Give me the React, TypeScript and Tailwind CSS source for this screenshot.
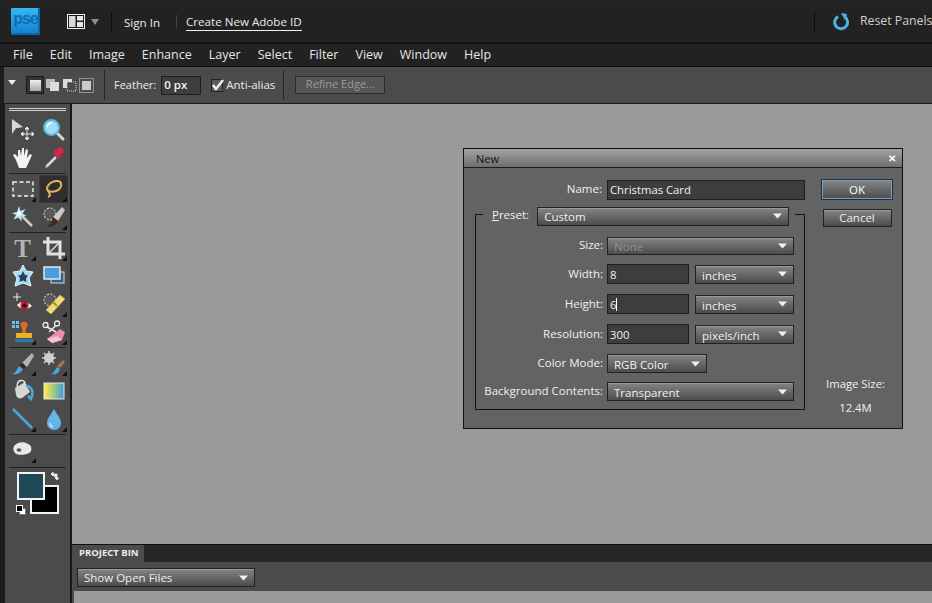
import type { ReactNode } from 'react'

const sel = 'bg-gradient-to-b from-[#858585] to-[#4c4c4c] border border-[#222] shadow-[inset_0_1px_0_#9a9a9a]'
const inputBox = 'bg-[#3d3d3d] border border-[#1d1d1d] text-[#f2f2f2] pl-[2px] text-[11.300px] flex items-center'

function Caret({ className = '' }: { className?: string }) {
  return (
    <svg width="9" height="6" viewBox="0 0 9 6" className={className}>
      <path d="M0 0.5h9L4.5 5.5z" fill="#f0f0f0" />
    </svg>
  )
}

function Select({ label, width, muted, height = 'h-[20px]', shift = 'translate-y-px' }: { label: string; width: string; muted?: boolean; height?: string; shift?: string }) {
  return (
    <div className={`${sel} ${width} ${height} pl-[6px] pr-[6px] flex items-center justify-between text-[11.500px] ${muted ? 'text-[#8e8e8e]' : 'text-[#f0f0f0]'}`}>
      <span className={shift}>{label}</span>
      <Caret />
    </div>
  )
}

function Label({ children, shift = '-translate-y-[1px]' }: { children: ReactNode; shift?: string }) {
  return <span className={`w-[128px] shrink-0 text-right whitespace-nowrap text-[11.500px] text-[#f0f0f0] pr-[1px] ${shift}`}>{children}</span>
}

function Row({ label, children, className = '', shift }: { label: string; children: ReactNode; className?: string; shift?: string }) {
  return (
    <div className={`flex items-center ${className}`}>
      <Label shift={shift}>{label}</Label>
      {children}
    </div>
  )
}

function Tool({ children, corner, active }: { children: ReactNode; corner?: boolean; active?: boolean }) {
  return (
    <div className={`relative w-[29px] h-[28px] flex items-center justify-center ${active ? 'bg-[#2f2f2f] shadow-[inset_0_0_0_1px_#3a3a3a]' : ''}`}>
      {children}
      {corner && (
        <svg width="5" height="5" viewBox="0 0 5 5" className="absolute right-[1px] bottom-[1px]">
          <path d="M5 0v5H0z" fill="#111" />
        </svg>
      )}
    </div>
  )
}

function Sep() {
  return <div className="h-px bg-[#222] mx-[4px] my-[1px]" />
}

function Ic({ children }: { children: ReactNode }) {
  return <svg width="24" height="24" viewBox="0 0 24 24">{children}</svg>
}

const toolRows: ReactNode[][] = [
  [
    <Tool key="move"><Ic><path d="M1 1l11 8-5 1-2 0-4 6z" fill="#d8d8d8" /><path d="M16 10v11M11 16h11M16 9l-2 2h4zM16 22l-2-2h4zM10 16l2-2v4zM23 16l-2-2v4z" stroke="#e6e6e6" strokeWidth="1" fill="#e6e6e6" /></Ic></Tool>,
    <Tool key="zoom"><Ic><path d="M14 14l7 7" stroke="#d5d5d5" strokeWidth="3" strokeLinecap="round" /><circle cx="9.5" cy="9.5" r="7.5" fill="#a5dcf5" stroke="#5ab4e2" strokeWidth="2" /><path d="M5 9a5 5 0 0 1 5-4" stroke="#fff" strokeWidth="1.5" fill="none" /></Ic></Tool>,
  ],
  [
    <Tool key="hand"><Ic><path d="M5 14L2 9l2-1 3 3 0-7 2 0 1 6 1-8h2l0 8 2-7 2 1-1 8 3-4 2 1-4 9-2 4H8z" fill="#f2f2f2" /></Ic></Tool>,
    <Tool key="eyedropper"><Ic><path d="M13 10l-9 9-1 3 3-1 9-9z" fill="#d9d9d9" stroke="#777" strokeWidth=".7" /><path d="M11 7l6 6 2-3-1-1 4-3-1-4-4-1-3 4-1-1z" fill="#d8264a" /></Ic></Tool>,
  ],
  [
    <Tool key="marquee" corner><svg width="22" height="16" viewBox="0 0 22 16"><rect x="1" y="1" width="20" height="14" fill="#565656" stroke="#f2f2f2" strokeWidth="1.4" strokeDasharray="4 2.5" /></svg></Tool>,
    <Tool key="lasso" corner active><Ic><path d="M6 20c3-1 2-4 0-6-3-4 3-11 10-10 5 1 4 8-2 10-3 1-7 1-8-1" fill="none" stroke="#e4b25e" strokeWidth="2" /></Ic></Tool>,
  ],
  [
    <Tool key="wand"><Ic><path d="M11 11l10 10" stroke="#cfcfcf" strokeWidth="2.5" /><path d="M8 1l1.5 5 5-2-3 4.500 4 2.500-5 .5 0 5-3-4-5 2 2.500-4.500L1 8l5-1z" fill="#bfe6fa" /><circle cx="8" cy="8.500" r="2" fill="#fff" /></Ic></Tool>,
    <Tool key="selbrush" corner><Ic><circle cx="8" cy="9" r="6" fill="#5a5a5a" stroke="#eee" strokeDasharray="2 1.500" /><path d="M11 12l9-10 3 3-7 11z" fill="#c9c9c9" /><path d="M4 22c5 0 10-1 12-6l-5-4c-1 5-3 8-7 10z" fill="#4b2a18" /></Ic></Tool>,
  ],
  [
    <Tool key="text" corner><span className="font-['Liberation_Serif',serif] text-[25px] leading-none font-bold text-[#b4b4b4]">T</span></Tool>,
    <Tool key="crop" corner><Ic><path d="M6 1v17h17M1 6h17v17" fill="none" stroke="#e2e2e2" strokeWidth="3" /><path d="M6 18L18 6" stroke="#e2e2e2" strokeWidth="1.500" /></Ic></Tool>,
  ],
  [
    <Tool key="cookie"><Ic><path d="M12 1l3 6 7 1-4 6 2 8-8-3-8 3 2-8-4-6 7-1z" fill="#a9dcf0" stroke="#e6f6fc" /><path d="M12 7l2 4 3 .5-2 3 .5 3.500-3.500-1.500-3.500 1.500.5-3.500-2-3 3-.5z" fill="#23475a" /></Ic></Tool>,
    <Tool key="shape"><Ic><rect x="9" y="8" width="13" height="11" fill="#3a5f7d" stroke="#d9d9d9" /><rect x="2" y="3" width="16" height="12" fill="#4a9ee0" stroke="#e6e6e6" strokeWidth="1.500" /></Ic></Tool>,
  ],
  [
    <Tool key="redeye"><Ic><path d="M6 1v8M2 5h8" stroke="#eee" strokeWidth="1" /><path d="M6 13c4-4 10-4 15 1-5 4-11 4-15-1z" fill="#f3f3f3" /><circle cx="13.500" cy="13.500" r="4" fill="#c0132a" /><circle cx="13.500" cy="13.500" r="1.800" fill="#111" /></Ic></Tool>,
    <Tool key="heal" corner><Ic><circle cx="8" cy="8" r="6" fill="#5a5a5a" stroke="#eee" strokeDasharray="2 1.500" /><path d="M4 18L18 3l5 4L9 22z" fill="#f0dc72" stroke="#c9b24a" strokeWidth=".6" /><path d="M11 10l4 4" stroke="#a68f33" strokeWidth="2" /></Ic></Tool>,
  ],
  [
    <Tool key="stamp" corner><Ic><rect x="1" y="1" width="3" height="3" fill="#6ec0f0" /><rect x="5" y="5" width="3" height="3" fill="#6ec0f0" /><rect x="5" y="1" width="3" height="3" fill="#6ec0f0" /><rect x="1" y="5" width="3" height="3" fill="#6ec0f0" /><circle cx="13" cy="5" r="3.500" fill="#d96a20" /><rect x="11" y="7" width="4" height="7" fill="#d96a20" /><rect x="5" y="13" width="16" height="5" fill="#efae26" /><rect x="4" y="19" width="18" height="3" fill="#1f7fb0" /></Ic></Tool>,
    <Tool key="cut" corner><Ic><circle cx="3.500" cy="5" r="2.500" fill="none" stroke="#eee" strokeWidth="1.300" /><circle cx="15" cy="3.500" r="2.500" fill="none" stroke="#eee" strokeWidth="1.300" /><path d="M5 7l9 5M13.500 6L7 12" stroke="#eee" strokeWidth="1.500" /><path d="M5 19l13-10 5 3-3 8-10 3z" fill="#ec8fa6" /><path d="M5 19l5 4 10-3-5-4z" fill="#f6c3cf" /></Ic></Tool>,
  ],
  [
    <Tool key="brush" corner><Ic><path d="M11 12L21 2l2 3-7 11z" fill="#b4b4b4" /><path d="M8 14l4-2 3 4-3 2z" fill="#2a2a2a" /><path d="M1 23c4-1 5-5 7-8l4 3c-2 4-6 6-11 5z" fill="#4aa8dc" /></Ic></Tool>,
    <Tool key="smart" corner><Ic><circle cx="7" cy="7" r="3.500" fill="none" stroke="#cfcfcf" strokeWidth="3" /><path d="M7 0v14M0 7h14M2 2l10 10M12 2L2 12" stroke="#cfcfcf" strokeWidth="1.500" /><path d="M15 15l6-6 2 2-5 6z" fill="#9a7a55" /><path d="M9 23c3-1 4-4 6-7l3 2c-1 4-4 6-9 5z" fill="#4aa8dc" /></Ic></Tool>,
  ],
  [
    <Tool key="bucket"><Ic><path d="M4 9l10-6 5 10-8 6c-3 1-5 0-6-3z" fill="#d6d6d6" /><path d="M6 8c0-8 7-8 8-4" fill="none" stroke="#eee" strokeWidth="1.300" /><path d="M15 7c6 0 8 6 5 13l-3-3" fill="none" stroke="#4aa8dc" strokeWidth="2.500" /></Ic></Tool>,
    <Tool key="gradient"><svg width="22" height="18" viewBox="0 0 22 18"><defs><linearGradient id="gr" x1="0" x2="1" y1="0.500" y2="0.500"><stop offset="0" stopColor="#fff23a" /><stop offset="1" stopColor="#3d9bd6" /></linearGradient></defs><rect x="1" y="1" width="20" height="16" fill="url(#gr)" stroke="#e6e6e6" /></svg></Tool>,
  ],
  [
    <Tool key="line" corner><Ic><path d="M2 2l19 19" stroke="#4aa8dc" strokeWidth="2.500" /></Ic></Tool>,
    <Tool key="blur" corner><Ic><path d="M12 2c3 6 7 9 7 14a7 7 0 0 1-14 0c0-5 4-8 7-14z" fill="#62b5e6" /><path d="M8 16a4 4 0 0 0 3 4" stroke="#cfeaf8" strokeWidth="1.500" fill="none" /></Ic></Tool>,
  ],
]

function Toolbar() {
  return (
    <div className="w-[68px] shrink-0 ml-[4px] bg-[#4b4b4b] border-l border-[#1c1c1c] border-r-2 border-r-[#181818] pt-[4px] h-full">
      <div className="mx-[4px] h-[3px] border-y border-[#d2d2d2]" />
      <div className="mt-[5px]">
        {toolRows.map((pair, i) => (
          <div key={i}>
            {(i === 2 || i === 4 || i === 8 || i === 11) && <Sep />}
            <div className="flex justify-between pl-[3px] pr-[2px]">{pair}</div>
          </div>
        ))}
        <Sep />
        <div className="pl-[3px]">
          <Tool corner><Ic><path d="M3 8c3-4 10-5 14-2 3 1 4 4 3 7-1 4-14 5-16 2-2-2-2-5-1-7z" fill="#e8e8e8" /><ellipse cx="8" cy="12" rx="2.500" ry="1.800" fill="#555" /></Ic></Tool>
        </div>
        <div className="h-[2px]" />
        <Sep />
        <div className="relative h-[50px] mx-[12px] mt-[4px]">
          <div className="absolute left-[13px] top-[13px] w-[29px] h-[29px] bg-black border-2 border-[#f2f2f2]" />
          <div className="absolute left-0 top-0 w-[28px] h-[28px] bg-[#1e4a58] border-2 border-[#f2f2f2]" />
          <svg width="10" height="10" viewBox="0 0 10 10" className="absolute left-[33px] -top-[1px]">
            <path d="M1 3h6v5M1 3l2-2v4zM7 9L5 7h4z" stroke="#eee" fill="#eee" strokeWidth=".8" />
          </svg>
          <div className="absolute -left-[1px] top-[33px] w-[7px] h-[7px] bg-black border border-white z-10" />
          <div className="absolute left-[2px] top-[36px] w-[7px] h-[7px] bg-white border border-[#777]" />
        </div>
      </div>
    </div>
  )
}

function Dialog() {
  return (
    <div className="absolute left-[391px] top-[44px] w-[440px] h-[281px] border border-[#111] bg-[#636363] flex flex-col">
      <div className="h-[19px] shrink-0 bg-gradient-to-b from-[#a3a3a3] to-[#6f6f6f] border-b border-[#1c1c1c] flex items-center justify-between pl-[12px] pr-[6px] text-[11px] text-[#111]">
        <span className="translate-y-px">New</span>
        <span className="text-white font-bold text-[10px]">✕</span>
      </div>
      <div className="flex pl-[11px] pt-[12px] relative flex-1">
        <div className="w-[331px] shrink-0">
          <div className="flex items-center h-[20px]">
            <Label>Name:</Label>
            <div className={`${inputBox} w-[198px] h-[20px] ml-[4px]`}><span>Christmas Card</span></div>
          </div>
          <div className="relative mt-[14px] border border-[#111] h-[196px] w-[330px]">
            <div className="absolute -top-[9px] left-[7px] pl-[9px] pr-[6px] bg-[#636363] flex items-center gap-[8px] h-[20px]">
              <span className="text-[11.500px] text-[#f0f0f0] -translate-y-[1px]"><span className="underline">P</span>reset:</span>
              <Select label="Custom" width="w-[252px]" height="h-[19px]" />
            </div>
            <div className="flex flex-col pt-[21px]">
              <Row label="Size:" className="h-[19px]"><div className="w-[3px]" /><Select label="None" muted width="w-[187px]" height="h-[18px]" /></Row>
              <Row label="Width:" className="mt-[9px] h-[20px]" shift="translate-y-0">
                <div className="w-[3px]" />
                <div className={`${inputBox} w-[82px] h-[20px]`}><span className="translate-y-px">8</span></div>
                <Select label="inches" width="w-[99px] ml-[6px]" height="h-[19px]" shift="translate-y-[2px]" />
              </Row>
              <Row label="Height:" className="mt-[10px] h-[20px]" shift="translate-y-0">
                <div className="w-[3px]" />
                <div className={`${inputBox} w-[82px] h-[20px]`}><span className="translate-y-px">6</span><span className="w-px h-[13px] bg-white" /></div>
                <Select label="inches" width="w-[99px] ml-[6px]" height="h-[19px]" shift="translate-y-[2px]" />
              </Row>
              <Row label="Resolution:" className="mt-[10px] h-[20px]" shift="translate-y-0">
                <div className="w-[3px]" />
                <div className={`${inputBox} w-[82px] h-[20px]`}><span className="translate-y-px">300</span></div>
                <Select label="pixels/inch" width="w-[99px] ml-[6px]" height="h-[19px]" shift="translate-y-[2px]" />
              </Row>
              <Row label="Color Mode:" className="mt-[10px] h-[19px]"><div className="w-[3px]" /><Select label="RGB Color" width="w-[100px]" height="h-[19px]" /></Row>
              <Row label="Background Contents:" className="mt-[9px] h-[19px]"><div className="w-[3px]" /><Select label="Transparent" width="w-[187px]" height="h-[19px]" /></Row>
            </div>
          </div>
        </div>
        <div className="flex-1 flex flex-col items-center pl-[1px] pr-[12px] ml-[15px]">
          <div className="w-[70px] h-[19px] bg-gradient-to-b from-[#848484] to-[#4e4e4e] border border-[#6fa0d8] outline outline-1 outline-[#2c2c2c] flex items-center justify-center text-[11.500px] text-white">OK</div>
          <div className={`${sel} w-[69px] h-[18px] mt-[10px] flex items-center justify-center text-[11.500px] text-[#f0f0f0]`}>Cancel</div>
          <div className="mt-[149px] -ml-[3px] text-[11.300px] text-[#f0f0f0] whitespace-nowrap">Image Size:</div>
          <div className="mt-[7px] -ml-[3px] text-[11.300px] text-[#f0f0f0]">12.4M</div>
        </div>
      </div>
    </div>
  )
}

export default function App() {
  return (
    <div className="w-[932px] h-[603px] overflow-hidden flex flex-col bg-[#1f1d1c] font-['Open_Sans','Noto_Sans',sans-serif]">
      {/* top bar */}
      <div className="h-[44px] shrink-0 bg-[#222222] border-t border-[#2e2320] border-b-2 border-b-[#111] flex items-center text-[11.600px] text-[#ececec] whitespace-nowrap">
        <div className="ml-[11px] w-[29px] h-[27px] bg-gradient-to-b from-[#37b7f0] to-[#0e7fd0] rounded-[1px] flex items-center justify-center shadow-[inset_-2px_-2px_0_#0b66aa] shrink-0">
          <span className="text-[16px] font-bold text-[#0f6cb4] leading-none -mt-[3px] font-['Liberation_Mono',monospace] tracking-[-1.500px]">pse</span>
        </div>
        <svg width="18" height="15" viewBox="0 0 18 15" className="ml-[27px] shrink-0">
          <rect x=".5" y=".5" width="17" height="14" fill="#1a1a1a" stroke="#f0f0f0" />
          <rect x="2" y="2" width="6.500" height="11" fill="#d8d8d8" />
          <rect x="10" y="2" width="6" height="4.500" fill="#e8e8e8" />
          <rect x="10" y="8" width="6" height="5" fill="#e8e8e8" />
        </svg>
        <svg width="8" height="6" viewBox="0 0 8 6" className="ml-[6px]"><path d="M0 0h8L4 6z" fill="#8f8f8f" /></svg>
        <div className="ml-[12px] w-px h-[20px] bg-[#0c0c0c]" />
        <span className="ml-[12px] translate-y-px">Sign In</span>
        <div className="ml-[16px] w-px h-[14px] bg-[#444]" />
        <span className="ml-[9px] border-b border-[#f0f0f0] leading-[16px] translate-y-px">Create New Adobe ID</span>
        <div className="ml-auto w-px h-[20px] bg-[#0c0c0c]" />
        <svg width="18" height="18" viewBox="0 0 18 18" className="ml-[17px]">
          <path d="M6 3.500A6.500 6.500 0 1 0 13 4" fill="none" stroke="#4db4e0" strokeWidth="3" />
          <path d="M9 0l6 1-2 6z" fill="#4db4e0" />
        </svg>
        <span className="ml-[10px] w-[72px] shrink-0 text-[12.300px] text-[#cfcfcf]">Reset Panels</span>
      </div>

      {/* menu */}
      <div className="h-[23px] shrink-0 bg-[#222222] border-b border-[#111] flex items-center pl-[13px] gap-[17px] text-[12.500px] text-[#e6e6e6]">
        {['File', 'Edit', 'Image', 'Enhance', 'Layer', 'Select', 'Filter', 'View', 'Window', 'Help'].map((m) => (
          <span key={m}>{m}</span>
        ))}
      </div>

      {/* options bar */}
      <div className="h-[37px] shrink-0 ml-[4px] bg-[#4b4b4b] border-b border-[#1a1a1a] flex items-center text-[11.500px] text-[#ececec] whitespace-nowrap">
        <svg width="8" height="5" viewBox="0 0 8 5" className="ml-[4px] -mt-[5px]"><path d="M0 0h8L4 5z" fill="#eee" /></svg>
        <div className="ml-[10px] w-[18px] h-[18px] border border-[#1a1a1a] bg-[#333] flex items-center justify-center"><div className="w-[11px] h-[11px] bg-gradient-to-b from-[#eee] to-[#aaa]" /></div>
        <svg width="15" height="14" viewBox="0 0 15 14" className="ml-[1px]"><rect x="1" y="1" width="9" height="9" fill="#bbb" /><rect x="5" y="4" width="9" height="9" fill="#ddd" /></svg>
        <svg width="15" height="14" viewBox="0 0 15 14" className="ml-[2px]"><rect x="1" y="1" width="9" height="9" fill="#ddd" /><rect x="5" y="4" width="9" height="9" fill="#4b4b4b" stroke="#ddd" strokeDasharray="1 1" /></svg>
        <svg width="15" height="15" viewBox="0 0 15 15" className="ml-[2px]"><rect x=".5" y=".5" width="14" height="14" fill="none" stroke="#ddd" strokeDasharray="1 1" /><rect x="3" y="3" width="9" height="9" fill="#ccc" /></svg>
        <div className="ml-[10px] w-px h-[30px] bg-[#242424]" />
        <span className="ml-[9px] text-[11px]">Feather:</span>
        <div className="ml-[5px] w-[40px] h-[19px] bg-[#3d3d3d] border border-[#1d1d1d] pl-[2px] flex items-center text-[11.500px] font-semibold text-[#f2f2f2]">0 px</div>
        <div className="ml-[10px] w-[12px] h-[13px] bg-[#5c5c5c] border border-[#222] flex items-center justify-center">
          <svg width="13" height="13" viewBox="0 0 13 13" className="shrink-0"><path d="M2 6l3 4 7-9" fill="none" stroke="#f0f0f0" strokeWidth="2.500" /></svg>
        </div>
        <span className="ml-[3px]">Anti-alias</span>
        <div className="ml-[8px] w-px h-[30px] bg-[#242424]" />
        <div className="ml-[11px] w-[90px] h-[18px] -mt-[1px] border border-[#2c2c2c] bg-[#555] flex items-center justify-center text-[#9a9a9a] text-[11px]">Refine Edge...</div>
      </div>

      {/* workspace */}
      <div className="flex-1 min-h-0 flex">
        <Toolbar />
        <div className="relative flex-1 min-w-0 flex flex-col bg-[#9a9a9a]">
          <div className="flex-1" />
          <Dialog />
          <div className="h-[59px] shrink-0 flex flex-col bg-[#4b4b4b]">
            <div className="h-[18px] shrink-0 bg-[#262626] border-t border-[#0f0f0f] flex">
              <div className="w-[72px] bg-[#4b4b4b] pl-[7px] text-[9.500px] font-bold text-[#ececec] flex items-center whitespace-nowrap">PROJECT BIN</div>
            </div>
            <div className="h-[29px] shrink-0 pl-[5px] pt-[6px]">
              <Select label="Show Open Files" width="w-[178px]" height="h-[19px]" shift="translate-y-0" />
            </div>
            <div className="flex-1 ml-[2px] bg-[#9a9a9a]" />
          </div>
        </div>
      </div>
    </div>
  )
}
